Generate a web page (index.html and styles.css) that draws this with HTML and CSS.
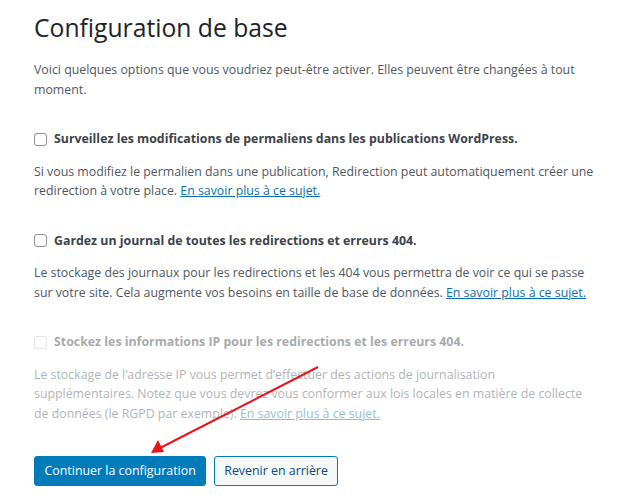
FILE: index.html
```html
<!DOCTYPE html>
<html lang="fr">
<head>
<meta charset="utf-8">
<title>Configuration de base</title>
<link rel="stylesheet" href="styles.css">
</head>
<body>
<div class="page">
  <h1 class="title">Configuration de base</h1>
  <p class="intro">Voici quelques options que vous voudriez peut-être activer. Elles peuvent être changées à tout moment.</p>

  <div class="option">
    <label class="opt-label"><span class="box"></span>Surveillez les modifications de permaliens dans les publications WordPress.</label>
    <p class="desc">Si vous modifiez le permalien dans une publication, Redirection peut automatiquement créer une redirection à votre place. <a href="#">En savoir plus à ce sujet.</a></p>
  </div>

  <div class="option">
    <label class="opt-label"><span class="box"></span>Gardez un journal de toutes les redirections et erreurs 404.</label>
    <p class="desc">Le stockage des journaux pour les redirections et les 404 vous permettra de voir ce qui se passe sur votre site. Cela augmente vos besoins en taille de base de données. <a href="#">En savoir plus à ce sujet.</a></p>
  </div>

  <div class="option disabled">
    <label class="opt-label"><span class="box"></span>Stockez les informations IP pour les redirections et les erreurs 404.</label>
    <p class="desc">Le stockage de l’adresse IP vous permet d’effectuer des actions de journalisation<br>supplémentaires. Notez que vous devrez vous conformer aux lois locales en matière de collecte<br>de données (le RGPD par exemple). <a href="#">En savoir plus à ce sujet.</a></p>
  </div>

  <div class="actions">
    <button class="btn btn-primary">Continuer la configuration</button>
    <button class="btn btn-secondary">Revenir en arrière</button>
  </div>

  <svg class="arrow" width="629" height="501" viewBox="0 0 629 501">
    <line x1="318" y1="367" x2="160" y2="448" stroke="#e8141a" stroke-width="2"/>
    <polygon points="151,453 158,440 164,452" fill="#e8141a"/>
  </svg>
</div>
</body>
</html>
```

FILE: styles.css
```css
html, body {
  margin: 0;
  padding: 0;
  background: #ffffff;
}
body {
  font-family: "Open Sans", "Noto Sans", sans-serif;
  color: #3c434a;
  font-size: 12.35px;
}
.page {
  position: relative;
  width: 629px;
  height: 501px;
  padding: 12px 29px 0 34px;
  box-sizing: border-box;
  overflow: hidden;
}
.title {
  margin: 0;
  font-size: 24.7px;
  font-weight: 400;
  line-height: 32px;
  color: #1d2327;
}
.intro {
  margin: 16px 0 0 0;
  line-height: 19.5px;
  color: #50575e;
}
.option {
  margin-top: 30px;
}
.opt-label {
  display: flex;
  align-items: center;
  font-weight: 700;
  color: #3c434a;
  line-height: 20px;
}
.box {
  width: 11px;
  height: 11px;
  border: 1px solid #8c8f94;
  border-radius: 3px;
  margin-right: 7px;
  flex: none;
  background: #fff;
}
.desc {
  margin: 12.5px 0 0 0;
  line-height: 19.5px;
  color: #50575e;
}
.desc a {
  color: #0a6fa8;
  text-decoration: underline;
}
.disabled {
  opacity: 0.45;
}
.disabled .box {
  border-color: #c3c4c7;
}
.actions {
  display: flex;
  gap: 8px;
  margin-top: 33px;
}
.btn {
  font-family: inherit;
  font-size: 12.4px;
  height: 30px;
  padding: 0 9.5px;
  border-radius: 3px;
  border: 1px solid #007cba;
  line-height: 28px;
}
.btn-primary {
  background: #007cba;
  color: #fff;
}
.btn-secondary {
  background: #f6f7f7;
  color: #0a4b78;
  padding: 0 9px;
}
.arrow {
  position: absolute;
  left: 0;
  top: 0;
  pointer-events: none;
}
```
